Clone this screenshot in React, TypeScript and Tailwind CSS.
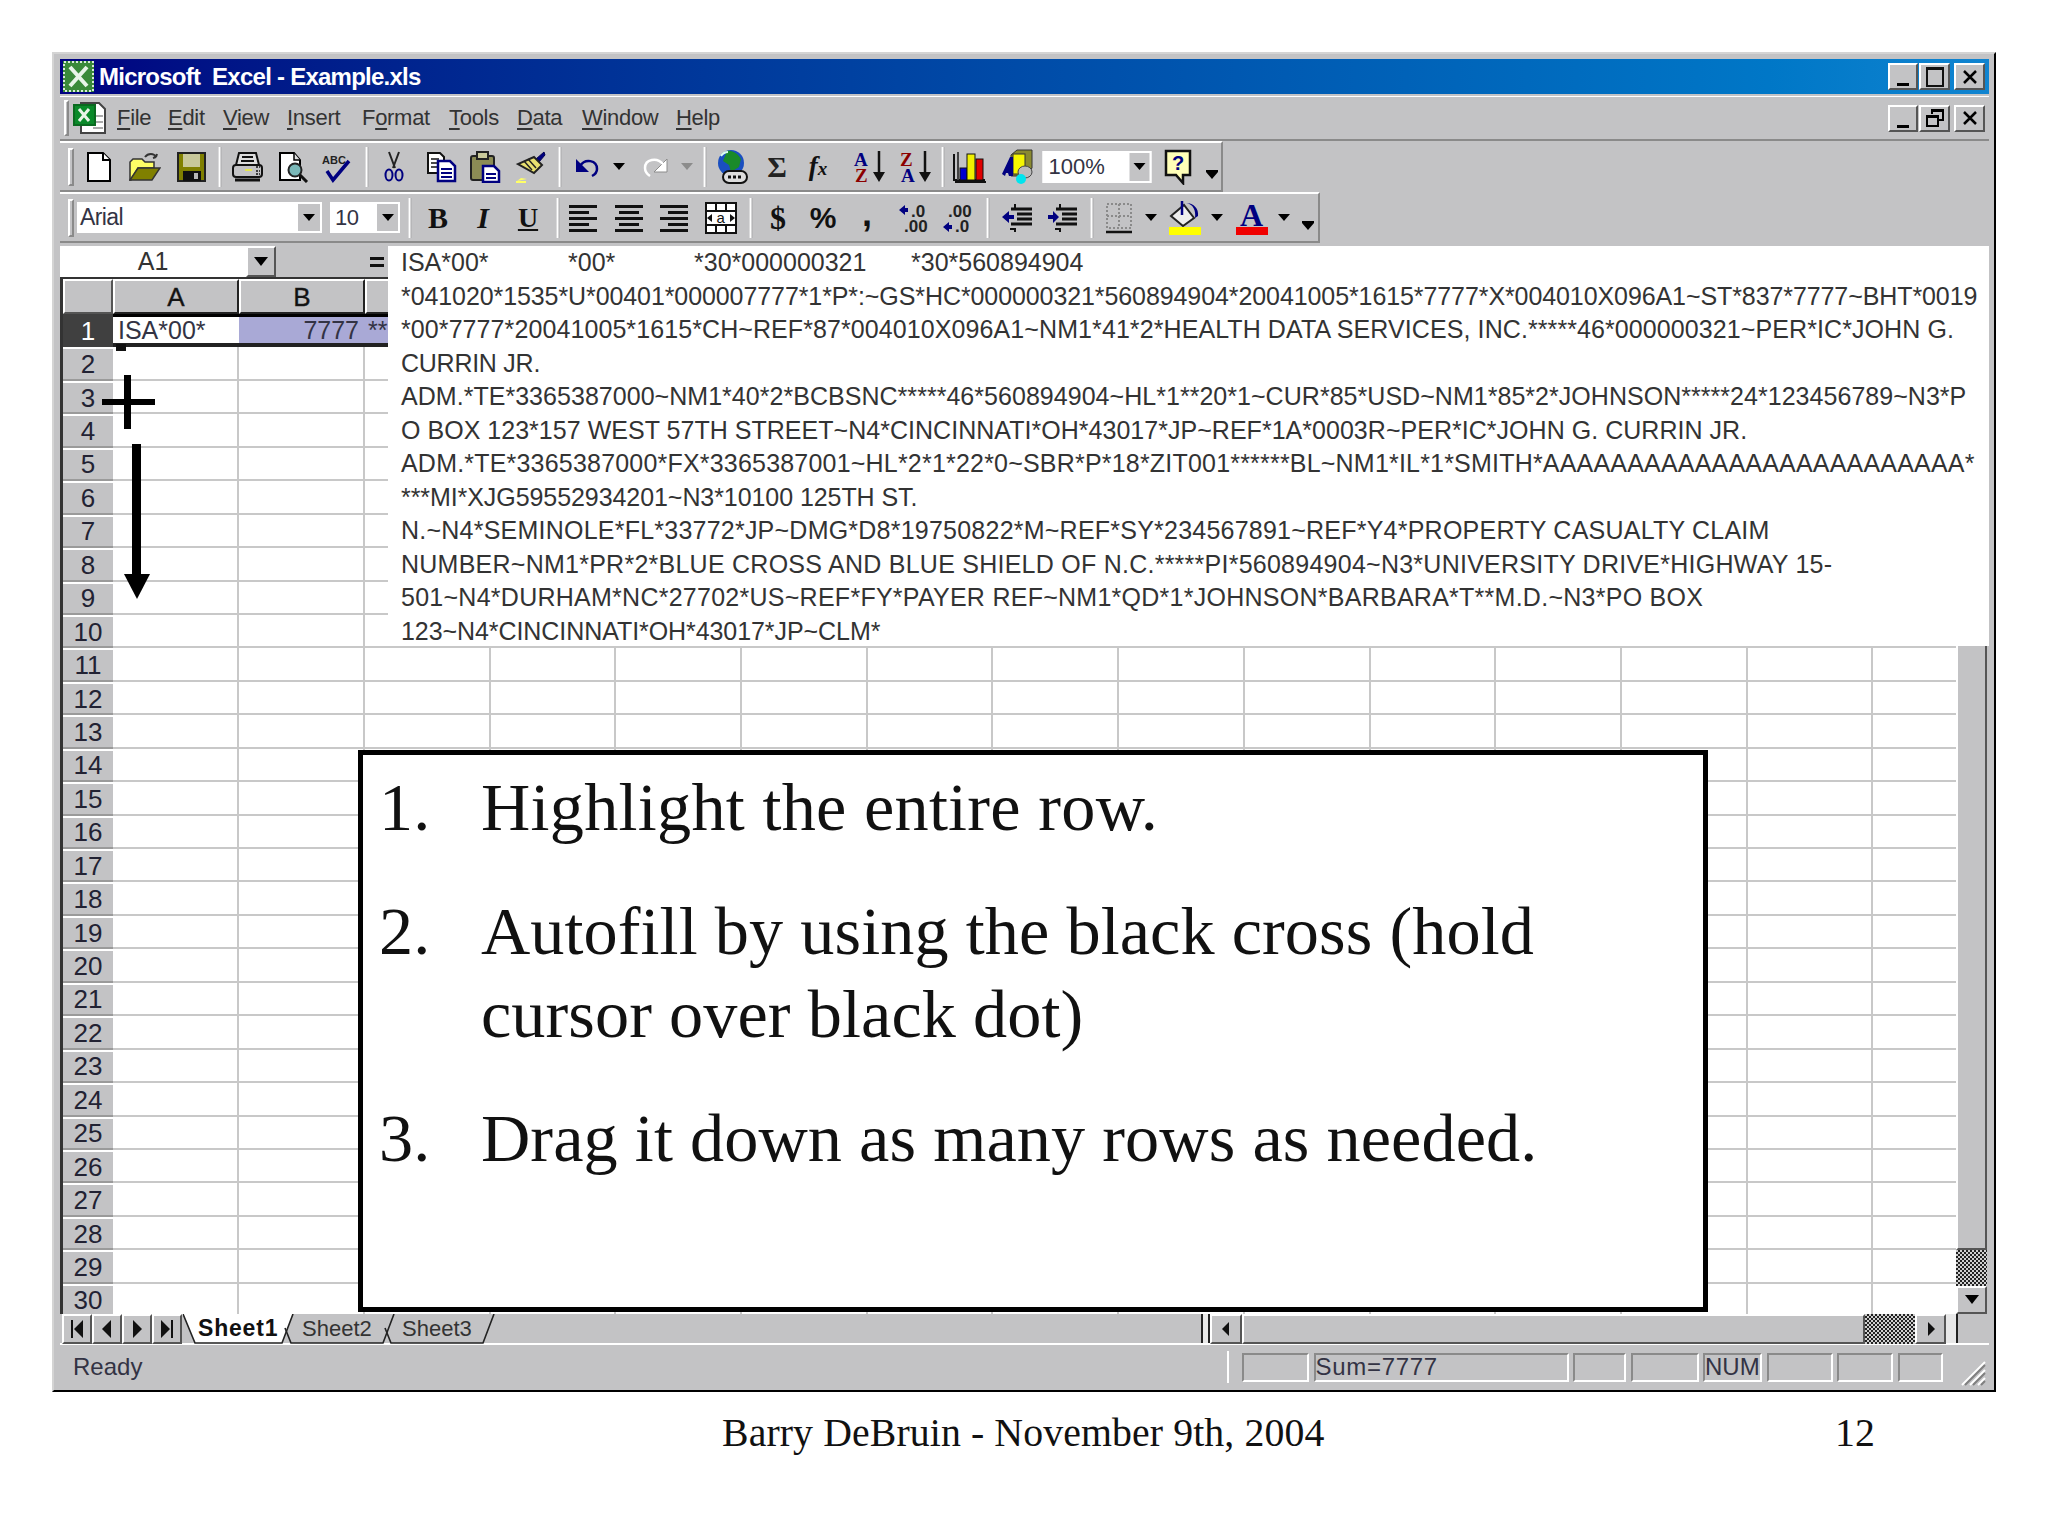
import type { ReactNode } from "react";

const GRAY = "bg-[#c3c3c5]";

function Ico({ w = 32, h = 32, children }: { w?: number; h?: number; children: ReactNode }) {
  return (
    <svg width={w} height={h} viewBox={`0 0 ${w} ${h}`} className="block flex-none">
      {children}
    </svg>
  );
}

// one toolbar entry: the child is centred on the left edge of the slot, the slot width is the step to the next one
function Slot({ w, children }: { w: string; children: ReactNode }) {
  return (
    <div className={`flex h-full flex-none items-center ${w}`}>
      <div className="flex-none -translate-x-1/2">{children}</div>
    </div>
  );
}

const Sep = () => <div className="h-[40px] w-[3px] border-l-2 border-white bg-[#a9a9ab]" />;
const Handle = () => <div className="h-[38px] w-[6px] flex-none border-l-2 border-t-2 border-white border-r-2 border-b-2 border-r-[#8a8a8a] border-b-[#8a8a8a]" />;

const Drop = ({ faded = false, low = false }: { faded?: boolean; low?: boolean }) => (
  <Ico w={14} h={low ? 28 : 10}>
    <polygon points={low ? "1,19 13,19 7,26" : "1,1 13,1 7,8"} fill={faded ? "#8c8c8c" : "#000"} />
    {low && <rect x="1" y="17" width="12" height="2" fill="#000" />}
  </Ico>
);

const NewIcon = () => (
  <Ico>
    <path d="M5 2h15l7 7v21H5z" fill="#fff" stroke="#000" strokeWidth="2" />
    <path d="M20 2v7h7" fill="#fff" stroke="#000" strokeWidth="2" />
  </Ico>
);
const OpenIcon = () => (
  <Ico>
    <path d="M1 29V11l3-3h9l3 3h9v6H9L2 29z" fill="#ffff66" stroke="#333" strokeWidth="1.5" />
    <path d="M1 29l8-12h22l-8 12z" fill="#808000" stroke="#333" strokeWidth="1.5" />
    <path d="M16 6c3-4 9-4 11 0M27 6l-3 1M27 6l1-3" fill="none" stroke="#333" strokeWidth="2" />
  </Ico>
);
const SaveIcon = () => (
  <Ico>
    <rect x="3" y="2" width="27" height="28" fill="#808000" stroke="#222" strokeWidth="2" />
    <rect x="8" y="3" width="17" height="13" fill="#c8c89a" />
    <rect x="8" y="20" width="18" height="10" fill="#111" />
    <rect x="19" y="22" width="4" height="6" fill="#b8b8b8" />
  </Ico>
);
const PrintIcon = () => (
  <Ico>
    <path d="M8 2h17l3 12H5z" fill="#ddd" stroke="#111" strokeWidth="2" />
    <path d="M11 6h11M10 10h13" stroke="#111" strokeWidth="2" />
    <rect x="2" y="14" width="29" height="12" rx="3" fill="#c3c3c5" stroke="#111" strokeWidth="2" />
    <path d="M4 29h25" stroke="#111" strokeWidth="3" />
    <rect x="14" y="18" width="7" height="2" fill="#e6e64d" />
    <path d="M25 16h4M25 20h4M25 23h4" stroke="#111" strokeWidth="1.5" strokeDasharray="2 1" />
  </Ico>
);
const PreviewIcon = () => (
  <Ico>
    <path d="M3 2h14l6 7v20H3z" fill="#fff" stroke="#000" strokeWidth="2" />
    <path d="M17 2v7h6" fill="#e0e0e0" stroke="#000" strokeWidth="1.5" />
    <circle cx="18" cy="19" r="6.5" fill="#7ab8b8" stroke="#222" strokeWidth="2" />
    <path d="M23 24l7 7" stroke="#111" strokeWidth="3" />
  </Ico>
);
const SpellIcon = () => (
  <Ico w={32} h={34}>
    <text x="1" y="14" fontFamily="Liberation Sans" fontWeight="700" fontSize="11" fill="#222">
      ABC
    </text>
    <path d="M6 21l6 9L28 11" fill="none" stroke="#000080" strokeWidth="3.5" />
  </Ico>
);
const CutIcon = () => (
  <Ico w={24}>
    <path d="M7 1l6 16M17 1l-6 16" stroke="#222" strokeWidth="2" fill="none" />
    <ellipse cx="7" cy="24" rx="3.5" ry="5.5" fill="none" stroke="#000080" strokeWidth="2" />
    <ellipse cx="17" cy="24" rx="3.5" ry="5.5" fill="none" stroke="#000080" strokeWidth="2" />
  </Ico>
);
const CopyIcon = () => (
  <Ico>
    <path d="M2 2h12l4 4v16H2z" fill="#fff" stroke="#111" strokeWidth="2" />
    <path d="M5 8h8M5 12h8M5 16h8" stroke="#111" strokeWidth="1.5" />
    <path d="M12 10h12l5 5v15H12z" fill="#fff" stroke="#000080" strokeWidth="2.5" />
    <path d="M15 18h11M15 22h11M15 26h11" stroke="#000080" strokeWidth="2" />
  </Ico>
);
const PasteIcon = () => (
  <Ico>
    <rect x="2" y="5" width="23" height="24" rx="2" fill="#8c8c55" stroke="#222" strokeWidth="2" />
    <rect x="8" y="1" width="11" height="7" fill="#c9c99a" stroke="#222" strokeWidth="2" />
    <path d="M14 15h11l5 5v11H14z" fill="#fff" stroke="#000080" strokeWidth="2.5" />
    <path d="M17 23h10M17 27h10" stroke="#000080" strokeWidth="2" />
  </Ico>
);
const BrushIcon = () => (
  <Ico>
    <path d="M22 8l8-7 1 3-6 7z" fill="#000080" stroke="#000050" />
    <path d="M20 6l8 8-8 8L4 13z" fill="#e8e070" stroke="#222" strokeWidth="2" />
    <path d="M10 10l8 9M14 8l8 9" stroke="#222" strokeWidth="1.5" />
    <path d="M3 30l10-2-6-1z" fill="#ffff66" />
    <path d="M2 31h10" stroke="#ffff66" strokeWidth="2" />
  </Ico>
);
const UndoIcon = () => (
  <Ico w={30} h={24}>
    <path d="M4 4v13h13z" fill="#000080" />
    <path d="M8 11c5-8 17-6 17 3 0 4-3 6-5 7" fill="none" stroke="#000080" strokeWidth="2.5" />
  </Ico>
);
const RedoIcon = () => (
  <Ico w={30} h={24}>
    <path d="M26 4v13H13z" fill="#fff" stroke="#8c8c8c" />
    <path d="M22 9C16 2 4 4 4 13c0 4 2 6 5 8" fill="none" stroke="#fff" strokeWidth="2.5" />
  </Ico>
);
const GlobeIcon = () => (
  <Ico w={34} h={36}>
    <circle cx="15" cy="14" r="13" fill="#1a4fc0" />
    <path d="M11 2c6-1 11 3 14 8l-2 8-8 5-2-7-6-4z" fill="#1a8a2a" />
    <path d="M5 7c2-3 5-4 7-4" stroke="#dfe" strokeWidth="2" fill="none" />
    <rect x="7" y="22" width="24" height="12" rx="6" fill="#ddd" stroke="#111" strokeWidth="2" />
    <path d="M12 28h14" stroke="#111" strokeWidth="3" strokeDasharray="3 2" />
  </Ico>
);
const SortIcon = ({ top, bottom, topC, botC }: { top: string; bottom: string; topC: string; botC: string }) => (
  <Ico w={36} h={42}>
    <text x="1" y="20" fontFamily="Liberation Serif" fontWeight="700" fontSize="19" fill={topC}>
      {top}
    </text>
    <text x="2" y="36" fontFamily="Liberation Serif" fontWeight="700" fontSize="19" fill={botC}>
      {bottom}
    </text>
    <path d="M26 5v24" stroke="#111" strokeWidth="2.5" />
    <polygon points="20,26 32,26 26,36" fill="#111" />
  </Ico>
);
const ChartIcon = () => (
  <Ico w={36} h={34}>
    <path d="M2 4v26h31" fill="none" stroke="#111" strokeWidth="2" />
    <rect x="5" y="2" width="2" height="28" fill="#444" />
    <rect x="8" y="18" width="7" height="12" fill="#0000d0" stroke="#111" />
    <rect x="15" y="4" width="8" height="26" fill="#f0f000" stroke="#111" />
    <rect x="24" y="9" width="7" height="21" fill="#e00000" stroke="#111" />
    <path d="M3 32h31" stroke="#111" strokeWidth="2" />
  </Ico>
);
const MapIcon = () => (
  <Ico w={32} h={36}>
    <path d="M10 6l6-5h15v18l-6 8H10z" fill="#8a8a30" stroke="#333" />
    <rect x="12" y="5" width="12" height="20" fill="#f5f500" stroke="#333" />
    <path d="M1 25L9 8l3 0v19H8l-1-3H5l-1 3z" fill="#000080" />
    <ellipse cx="24" cy="23" rx="7" ry="6" fill="#bbb" stroke="#444" />
    <circle cx="20" cy="30" r="5" fill="#00e5ee" />
  </Ico>
);
const HelpIcon = () => (
  <Ico w={30} h={36}>
    <path d="M3 2h24v24H20v8l-7-8H3z" fill="#ffffb8" stroke="#111" strokeWidth="2.5" />
    <text x="9" y="21" fontFamily="Liberation Sans" fontWeight="700" fontSize="20" fill="#000080">
      ?
    </text>
  </Ico>
);
const AlignIcon = ({ kind }: { kind: "l" | "c" | "r" }) => {
  const rows = [28, 20, 28, 20, 28];
  return (
    <Ico w={30} h={30}>
      {rows.map((r, i) => (
        <rect key={i} x={kind === "l" ? 1 : kind === "c" ? 1 + (28 - r) / 2 : 29 - r} y={2 + i * 6} width={r} height="3" fill="#111" />
      ))}
    </Ico>
  );
};
const MergeIcon = () => (
  <Ico>
    <rect x="1" y="1" width="30" height="30" fill="#fff" stroke="#111" strokeWidth="2" />
    <path d="M1 9h30M1 23h30M11 1v8M21 1v8M11 23v8M21 23v8" stroke="#111" strokeWidth="2" />
    <path d="M2 16l5-4v8zM30 16l-5-4v8z" fill="#111" />
    <text x="11.5" y="21" fontFamily="Liberation Sans" fontSize="15" fill="#111">
      a
    </text>
  </Ico>
);
const DecIcon = ({ up }: { up: boolean }) => (
  <Ico w={32} h={38}>
    <text x={up ? 13 : 6} y="18" fontFamily="Liberation Sans" fontWeight="700" fontSize="17" fill="#222">
      {up ? ".0" : ".00"}
    </text>
    <text x={up ? 6 : 13} y="33" fontFamily="Liberation Sans" fontWeight="700" fontSize="17" fill="#222">
      {up ? ".00" : ".0"}
    </text>
    <path d={up ? "M1 11l6-5v3h3v4H7v3z" : "M1 28l6-5v3h3v4H7v3z"} fill="#000080" />
  </Ico>
);
const IndentIcon = ({ out }: { out: boolean }) => (
  <Ico>
    <path d="M14 2v4M14 26v4" stroke="#111" strokeWidth="2" />
    <path d="M10 7h21M16 12h15M16 17h15M10 22h21" stroke="#111" strokeWidth="3" />
    <path d="M9 27h6" stroke="#111" strokeWidth="2" />
    {out ? <path d="M1 15l7-6v4h5v4H8v4z" fill="#000080" /> : <path d="M13 15l-6-6v4H2v4h5v4z" fill="#000080" />}
  </Ico>
);
const BorderIcon = () => (
  <Ico>
    <rect x="4" y="2" width="24" height="24" fill="none" stroke="#8a8a8a" strokeWidth="2" strokeDasharray="2 2" />
    <path d="M16 2v24M4 14h24" stroke="#8a8a8a" strokeWidth="2" strokeDasharray="2 2" />
    <path d="M3 30h26" stroke="#111" strokeWidth="2.5" />
  </Ico>
);
const FillIcon = () => (
  <Ico w={34} h={36}>
    <path d="M3 16L16 5l10 13-11 8z" fill="#eee" stroke="#222" strokeWidth="2" />
    <path d="M14 1v14" stroke="#000080" strokeWidth="2.5" />
    <path d="M18 3c7 1 10 7 9 15l3-2c1-7-4-13-12-13z" fill="#000080" />
    <rect x="1" y="27" width="32" height="8" fill="#ffff00" />
  </Ico>
);
const FontColorIcon = () => (
  <Ico w={34} h={44}>
    <text x="5" y="30" fontFamily="Liberation Serif" fontWeight="700" fontSize="32" fill="#000080">
      A
    </text>
    <rect x="1" y="31" width="32" height="8" fill="#f00000" />
  </Ico>
);
const Glyph = ({ children, cls }: { children: ReactNode; cls: string }) => <span className={`block leading-none ${cls}`}>{children}</span>;

const SERIF = "[font-family:'Liberation_Serif',serif]";

const row1: [string, ReactNode][] = [
  ["w-[46px]", <NewIcon />],
  ["w-[46px]", <OpenIcon />],
  ["w-[29px]", <SaveIcon />],
  ["w-[27px]", <Sep />],
  ["w-[46px]", <PrintIcon />],
  ["w-[44px]", <PreviewIcon />],
  ["w-[30px]", <SpellIcon />],
  ["w-[27px]", <Sep />],
  ["w-[48px]", <CutIcon />],
  ["w-[43px]", <CopyIcon />],
  ["w-[45px]", <PasteIcon />],
  ["w-[30px]", <BrushIcon />],
  ["w-[27px]", <Sep />],
  ["w-[32px]", <UndoIcon />],
  ["w-[37px]", <Drop />],
  ["w-[31px]", <RedoIcon />],
  ["w-[18px]", <Drop faded />],
  ["w-[28px]", <Sep />],
  ["w-[44px]", <GlobeIcon />],
  ["w-[41px]", <Glyph cls={`text-[30px] font-bold text-[#222] ${SERIF}`}>Σ</Glyph>],
  [
    "w-[53px]",
    <Glyph cls={`text-[27px] font-bold italic text-[#111] ${SERIF}`}>
      f<span className="text-[19px]">x</span>
    </Glyph>,
  ],
  ["w-[46px]", <SortIcon top="A" bottom="Z" topC="#000080" botC="#8b0000" />],
  ["w-[26px]", <SortIcon top="Z" bottom="A" topC="#8b0000" botC="#000080" />],
  ["w-[27px]", <Sep />],
  ["w-[47px]", <ChartIcon />],
  ["w-[80px]", <MapIcon />],
  [
    "w-[81px]",
    <div className="flex h-[32px] w-[109px] items-center justify-between border-2 border-white bg-white pl-[4px]">
      <span className="text-[22px] text-[#334]">100%</span>
      <span className="flex h-full w-[20px] items-center justify-center bg-[#c3c3c5]">
        <Drop />
      </span>
    </div>,
  ],
  ["w-[34px]", <HelpIcon />],
  ["w-0", <Drop low />],
];

const row2: [string, ReactNode][] = [
  ["w-[45px]", <Glyph cls={`text-[30px] font-bold text-[#111] ${SERIF}`}>B</Glyph>],
  ["w-[45px]", <Glyph cls={`text-[30px] font-bold italic text-[#111] ${SERIF}`}>I</Glyph>],
  ["w-[30px]", <Glyph cls={`text-[28px] font-bold underline text-[#111] ${SERIF}`}>U</Glyph>],
  ["w-[25px]", <Sep />],
  ["w-[46px]", <AlignIcon kind="l" />],
  ["w-[45px]", <AlignIcon kind="c" />],
  ["w-[47px]", <AlignIcon kind="r" />],
  ["w-[30px]", <MergeIcon />],
  ["w-[27px]", <Sep />],
  ["w-[45px]", <Glyph cls={`text-[32px] font-bold text-[#111] ${SERIF}`}>$</Glyph>],
  ["w-[44px]", <Glyph cls="text-[30px] font-bold text-[#111]">%</Glyph>],
  ["w-[47px]", <Glyph cls="-mt-[8px] text-[36px] font-bold text-[#111]">,</Glyph>],
  ["w-[44px]", <DecIcon up />],
  ["w-[30px]", <DecIcon up={false} />],
  ["w-[29px]", <Sep />],
  ["w-[45px]", <IndentIcon out />],
  ["w-[30px]", <IndentIcon out={false} />],
  ["w-[27px]", <Sep />],
  ["w-[32px]", <BorderIcon />],
  ["w-[34px]", <Drop />],
  ["w-[32px]", <FillIcon />],
  ["w-[35px]", <Drop />],
  ["w-[32px]", <FontColorIcon />],
  ["w-[24px]", <Drop />],
  ["w-0", <Drop low />],
];

const menus: [string, string, string, string][] = [
  ["w-[51px]", "", "F", "ile"],
  ["w-[55px]", "", "E", "dit"],
  ["w-[64px]", "", "V", "iew"],
  ["w-[75px]", "", "I", "nsert"],
  ["w-[87px]", "F", "o", "rmat"],
  ["w-[68px]", "", "T", "ools"],
  ["w-[65px]", "", "D", "ata"],
  ["w-[94px]", "", "W", "indow"],
  ["w-[50px]", "", "H", "elp"],
];

const formula: [string, string][] = [
  ["tracking-[-0.09px]", "*041020*1535*U*00401*000007777*1*P*:~GS*HC*000000321*560894904*20041005*1615*7777*X*004010X096A1~ST*837*7777~BHT*0019"],
  ["tracking-[0.09px]", "*00*7777*20041005*1615*CH~REF*87*004010X096A1~NM1*41*2*HEALTH DATA SERVICES, INC.*****46*000000321~PER*IC*JOHN G."],
  ["tracking-[-0.26px]", "CURRIN JR."],
  ["tracking-[0.035px]", "ADM.*TE*3365387000~NM1*40*2*BCBSNC*****46*560894904~HL*1**20*1~CUR*85*USD~NM1*85*2*JOHNSON*****24*123456789~N3*P"],
  ["tracking-[0.03px]", "O BOX 123*157 WEST 57TH STREET~N4*CINCINNATI*OH*43017*JP~REF*1A*0003R~PER*IC*JOHN G. CURRIN JR."],
  ["tracking-[0.2px]", "ADM.*TE*3365387000*FX*3365387001~HL*2*1*22*0~SBR*P*18*ZIT001******BL~NM1*IL*1*SMITH*AAAAAAAAAAAAAAAAAAAAAAAAA*"],
  ["tracking-[-0.07px]", "***MI*XJG59552934201~N3*10100 125TH ST."],
  ["tracking-[0.23px]", "N.~N4*SEMINOLE*FL*33772*JP~DMG*D8*19750822*M~REF*SY*234567891~REF*Y4*PROPERTY CASUALTY CLAIM"],
  ["tracking-[0.25px]", "NUMBER~NM1*PR*2*BLUE CROSS AND BLUE SHIELD OF N.C.*****PI*560894904~N3*UNIVERSITY DRIVE*HIGHWAY 15-"],
  ["tracking-[0.26px]", "501~N4*DURHAM*NC*27702*US~REF*FY*PAYER REF~NM1*QD*1*JOHNSON*BARBARA*T**M.D.~N3*PO BOX"],
  ["tracking-[-0.07px]", "123~N4*CINCINNATI*OH*43017*JP~CLM*"],
];

const bevel = "border-2 border-t-white border-l-white border-r-[#555] border-b-[#555]";
const ctrlBtn = `flex items-center justify-center bg-[#c3c3c5] ${bevel}`;
const dither = "bg-[repeating-conic-gradient(#222_0_25%,#d0d0d0_0_50%)] bg-[length:4px_4px]";

function WinButtons({ restore }: { restore?: boolean }) {
  return (
    <div className="flex items-center">
      <div className={`${ctrlBtn} h-[27px] w-[30px] items-end pb-[2px]`}>
        <div className="h-[3px] w-[12px] bg-black" />
      </div>
      <div className={`${ctrlBtn} ml-[1px] h-[27px] w-[31px]`}>
        {restore ? (
          <Ico w={18} h={18}>
            <path d="M6 5V1h11v10h-4" fill="none" stroke="#000" strokeWidth="2" />
            <path d="M6 2h11" stroke="#000" strokeWidth="2" />
            <rect x="1" y="7" width="11" height="10" fill="none" stroke="#000" strokeWidth="2" />
            <path d="M1 8h11" stroke="#000" strokeWidth="2" />
          </Ico>
        ) : (
          <Ico w={20} h={20}>
            <rect x="2" y="1" width="16" height="18" fill="none" stroke="#111" strokeWidth="2" />
            <path d="M2 2h16" stroke="#111" strokeWidth="2" />
          </Ico>
        )}
      </div>
      <div className={`${ctrlBtn} ml-[4px] h-[27px] w-[31px]`}>
        <Ico w={16} h={16}>
          <path d="M2 2l12 12M14 2L2 14" stroke="#000" strokeWidth="2.5" />
        </Ico>
      </div>
    </div>
  );
}

const colWidths = ["w-[126px]", "w-[126px]"];
const gridCols = Array.from({ length: 15 }, (_, i) => colWidths[i] ?? "w-[125.7px]");

function HeaderRow() {
  return (
    <div className="flex h-[35px] flex-none">
      <div className={`h-full w-[50px] flex-none bg-[#c3c3c5] ${bevel}`} />
      {gridCols.map((w, i) => (
        <div key={i} className={`flex h-full flex-none items-center justify-center border-2 border-t-white border-l-white border-r-[#222] border-b-[#222] bg-[#c3c3c5] text-[26px] leading-none text-[#111] [-webkit-text-stroke:0.4px_#222] ${w}`}>
          {i === 0 ? "A" : i === 1 ? "B" : ""}
        </div>
      ))}
    </div>
  );
}

function SheetRow({ n }: { n: number }) {
  const active = n === 1;
  return (
    <div className="flex h-[33.44px] flex-none">
      <div
        className={`flex h-full w-[50px] flex-none items-center justify-center text-[26px] leading-none ${
          active ? "bg-[#404040] text-white" : "border-b-2 border-t-2 border-t-white border-b-[#9a9a9a] bg-[#c3c3c5] text-[#223]"
        }`}
      >
        {n}
      </div>
      {gridCols.map((w, i) => (
        <div
          key={i}
          className={`flex h-full flex-none items-center overflow-hidden whitespace-nowrap text-[25px] leading-none text-[#334] ${w} ${
            active
              ? `border-t-[3px] border-b-[4px] border-t-black border-b-[#222] ${i === 0 ? "bg-white pl-[5px]" : "bg-[#a9a9d6]"} ${i === 1 ? "justify-end pr-[6px]" : "pl-[3px]"}`
              : "border-b-2 border-r-2 border-[#c8c8c8] bg-white"
          }`}
        >
          {active && i === 0 && "ISA*00*"}
          {active && i === 1 && "7777"}
          {active && i === 2 && "**"}
        </div>
      ))}
    </div>
  );
}

function Tab({ w, label, active }: { w: string; label: string; active?: boolean }) {
  return (
    <div className={`relative flex h-full flex-none items-center ${active ? "pl-[15px]" : "pl-[18px]"} ${w}`}>
      <svg className="absolute left-0 top-0" width="112" height="31" viewBox="0 0 112 31">
        {active && <polygon points="0,0 12,29 99,29 110,0" fill="#fff" />}
        <path d={active ? "M0 0L12 29H99L110 0" : "M1 14L7 29H99L110 0"} fill="none" stroke="#222" strokeWidth="1.6" />
      </svg>
      <span className={`relative leading-none ${active ? "text-[23px] font-bold tracking-[0.8px] text-[#111]" : "text-[22px] text-[#333]"}`}>{label}</span>
    </div>
  );
}

function NavBtn({ d, cls }: { d: string; cls: string }) {
  return (
    <div className={`${ctrlBtn} h-[30px] flex-none ${cls}`}>
      <Ico w={16} h={20}>
        <path d={d} fill="#111" />
      </Ico>
    </div>
  );
}

const Panel = ({ w, text, track = "" }: { w: string; text?: string; track?: string }) => (
  <div className={`flex h-[29px] flex-none items-center border-2 border-t-[#8a8a8a] border-l-[#8a8a8a] border-r-white border-b-white text-[24px] leading-none text-[#334] ${track} ${w}`}>{text}</div>
);

export default function App() {
  return (
    <div className="relative h-[1536px] w-[2048px] overflow-hidden bg-white pl-[52px] pt-[52px] [font-family:'Liberation_Sans',Arial,sans-serif]">
      <div className={`flex h-[1340px] w-[1944px] flex-col border-b-2 border-l-2 border-r-2 border-t-2 border-b-black border-l-[#d4d4d4] border-r-black border-t-[#d4d4d4] pb-[1px] pl-[6px] pr-[5px] pt-[5px] ${GRAY}`}>
        {/* Title bar */}
        <div className="flex h-[35px] flex-none items-center justify-between bg-gradient-to-r from-[#000080] to-[#1084d0] pl-[3px] pr-[4px]">
          <div className="flex items-center">
            <Ico w={31} h={31}>
              <rect width="31" height="31" fill="#3a8a3a" />
              <rect x="1" y="1" width="29" height="29" fill="none" stroke="#d8ecd8" strokeWidth="2" strokeDasharray="2 2" />
              <path d="M7 6l17 19M24 6L7 25" stroke="#e8f4e8" strokeWidth="4" />
            </Ico>
            <span className="ml-[5px] whitespace-pre text-[24px] font-bold leading-none tracking-[-0.75px] text-white">Microsoft  Excel - Example.xls</span>
          </div>
          <WinButtons />
        </div>
        <div className="mt-[2px] h-[1px] flex-none bg-white" />
        {/* Menu bar */}
        <div className="flex h-[44px] flex-none items-center justify-between border-b-2 border-[#8a8a8a] pl-[4px] pr-[4px]">
          <div className="flex items-center">
            <div className="h-[36px] w-[5px] flex-none border-l-2 border-t-2 border-white border-b-2 border-r-2 border-b-[#8a8a8a] border-r-[#8a8a8a]" />
            <div className="ml-[4px]">
              <Ico w={34} h={32}>
                <path d="M8 1h18l6 6v24H8z" fill="#fff" stroke="#444" strokeWidth="2" />
                <path d="M20 14h10M20 20h10M20 26h10" stroke="#aaa" strokeWidth="2" />
                <rect x="1" y="3" width="21" height="20" fill="#0a8a2a" stroke="#0a6a20" strokeWidth="2" />
                <path d="M6 7l10 12M16 7L6 19" stroke="#e8f4e8" strokeWidth="3" />
              </Ico>
            </div>
            <div className="ml-[10px] flex items-center text-[22px] leading-none tracking-[-0.3px] text-[#333]">
              {menus.map(([w, pre, u, rest]) => (
                <span key={u + rest} className={`flex-none ${w}`}>
                  {pre}
                  <span className="underline underline-offset-[3px]">{u}</span>
                  {rest}
                </span>
              ))}
            </div>
          </div>
          <WinButtons restore />
        </div>
        {/* Toolbars */}
        <div className="flex h-[51px] w-[1163px] flex-none items-center border-t-2 border-r-2 border-b-2 border-t-white border-r-[#8a8a8a] border-b-[#8a8a8a] pl-[8px]">
          <Handle />
          <div className="w-[25px] flex-none" />
          {row1.map(([w, node], i) => (
            <Slot key={i} w={w}>
              {node}
            </Slot>
          ))}
        </div>
        <div className="flex h-[51px] w-[1260px] flex-none items-center border-t-2 border-r-2 border-b-2 border-t-white border-r-[#8a8a8a] border-b-[#8a8a8a] pl-[8px]">
          <Handle />
          <div className="ml-[3px] flex h-[31px] w-[245px] flex-none items-center justify-between border-2 border-white bg-white pl-[1px] text-[23px] leading-none tracking-[-0.6px] text-[#334]">
            Arial
            <span className="flex h-full w-[22px] items-center justify-center bg-[#c3c3c5]">
              <Drop />
            </span>
          </div>
          <div className="ml-[8px] flex h-[31px] w-[70px] flex-none items-center justify-between border-2 border-white bg-white pl-[3px] text-[22px] leading-none tracking-[-0.5px] text-[#334]">
            10
            <span className="flex h-full w-[21px] items-center justify-center bg-[#c3c3c5]">
              <Drop />
            </span>
          </div>
          <div className="w-[10px] flex-none" />
          <Slot w="w-[28px]">
            <Sep />
          </Slot>
          {row2.map(([w, node], i) => (
            <Slot key={i} w={w}>
              {node}
            </Slot>
          ))}
        </div>
        {/* Sheet */}
        <div className="relative mt-[3px] flex min-h-0 flex-1 flex-col">
          <div className="flex h-[33px] flex-none items-center border-b-2 border-[#333]">
            <div className="flex h-full w-[186px] flex-none items-center justify-center bg-white pl-[0px] text-[25px] leading-none text-[#333]">A1</div>
            <div className={`${ctrlBtn} h-full w-[30px] flex-none`}>
              <Ico w={16} h={10}>
                <polygon points="1,0 15,0 8,9" fill="#000" />
              </Ico>
            </div>
            <div className="ml-[94px] flex-none">
              <Ico w={14} h={12}>
                <rect y="1" width="14" height="3" fill="#111" />
                <rect y="8" width="14" height="3" fill="#111" />
              </Ico>
            </div>
          </div>
          <div className="flex h-[1035px] flex-none">
            <div className="relative min-w-0 flex-1 overflow-hidden border-l-[3px] border-[#333]">
              <HeaderRow />
              {Array.from({ length: 30 }, (_, i) => (
                <SheetRow key={i} n={i + 1} />
              ))}
              {/* selection handle */}
              <div className="absolute left-[53px] top-[65px] h-[7px] w-[10px] bg-[#111]" />
            </div>
            <div className="flex w-[33px] flex-none flex-col pr-[2px]">
              <div className={`min-h-0 flex-1 bg-[#c3c3c5] ${bevel}`} />
              <div className={`h-[36px] flex-none ${dither}`} />
              <div className={`${ctrlBtn} h-[28px] flex-none`}>
                <Ico w={16} h={10}>
                  <polygon points="1,0 15,0 8,9" fill="#000" />
                </Ico>
              </div>
            </div>
          </div>
          {/* Tabs + horizontal scrollbar */}
          <div className="flex h-[31px] flex-none items-start border-b-2 border-white pl-[2px]">
            <NavBtn cls="w-[30px]" d="M2 1h2v18H2zM14 1v18L5 10z" />
            <NavBtn cls="w-[30px]" d="M12 1v18L3 10z" />
            <NavBtn cls="w-[30px]" d="M4 1v18l9-9z" />
            <NavBtn cls="w-[30px]" d="M2 1v18l9-9zM12 1h2v18h-2z" />
            <div className="w-[1px] flex-none" />
            <Tab w="w-[101px]" label="Sheet1" active />
            <Tab w="w-[100px]" label="Sheet2" />
            <Tab w="w-[114px]" label="Sheet3" />
            <div className="w-[703px] flex-none" />
            <div className="h-full w-[9px] flex-none border-l-2 border-r-2 border-l-[#222] border-r-[#222] bg-[#e8e8e8]" />
            <NavBtn cls="w-[32px]" d="M11 3v14L4 10z" />
            <div className={`h-[30px] w-[623px] flex-none ${bevel}`} />
            <div className={`h-[30px] w-[50px] flex-none ${dither}`} />
            <NavBtn cls="w-[31px]" d="M5 3v14l7-7z" />
            <div className="h-full w-[12px] flex-none border-r-2 border-[#222] bg-[#e8e8e8]" />
          </div>
          {/* Status bar */}
          <div className="flex min-h-0 flex-1 items-center pl-[13px] pr-[2px] text-[24px] leading-none text-[#334]">
            <div className="w-[1154px] flex-none">Ready</div>
            <div className="h-[32px] w-[2px] flex-none bg-white" />
            <div className="ml-[13px] flex items-center gap-[4.5px]">
              <Panel w="w-[67px]" />
              <Panel w="w-[255px]" text="Sum=7777" track="tracking-[0.7px]" />
              <Panel w="w-[53px]" />
              <Panel w="w-[68px]" />
              <Panel w="w-[59px]" text="NUM" />
              <Panel w="w-[66px]" />
              <Panel w="w-[56px]" />
              <Panel w="w-[45px]" />
            </div>
            <div className="ml-auto self-end pb-[3px]">
              <Ico w={28} h={26}>
                <path d="M3 25L26 2M11 25L26 10M19 25l7-7" stroke="#fff" strokeWidth="2" />
                <path d="M6 25L26 5M14 25L26 13M22 25l4-4" stroke="#808080" strokeWidth="2" />
              </Ico>
            </div>
          </div>

          {/* Expanded formula text lies over the sheet */}
          <div className="absolute left-[328px] right-0 top-0 h-[400px] bg-white pl-[13px] text-[25px] leading-[33.5px] text-[#333]">
            <div className="flex h-[33.5px] whitespace-pre">
              <span className="w-[167px] flex-none">ISA*00*</span>
              <span className="w-[126px] flex-none">*00*</span>
              <span className="w-[217px] flex-none">*30*000000321</span>
              <span>*30*560894904</span>
            </div>
            {formula.map(([track, line]) => (
              <div key={line} className={`h-[33.5px] whitespace-pre ${track}`}>
                {line}
              </div>
            ))}
          </div>

          {/* Cross and arrow drawn on the slide */}
          <div className="absolute left-[42px] top-[129px]">
            <Ico w={54} h={54}>
              <rect x="0" y="24" width="53" height="6" fill="#000" />
              <rect x="22" y="0" width="7" height="54" fill="#000" />
            </Ico>
          </div>
          <div className="absolute left-[64px] top-[198px]">
            <Ico w={26} h={156}>
              <rect x="8" y="0" width="9" height="131" fill="#000" />
              <polygon points="0,130 26,130 13,155" fill="#000" />
            </Ico>
          </div>

          {/* Numbered steps box */}
          <div className={`absolute left-[298px] top-[504px] h-[562px] w-[1350px] border-[5px] border-black bg-white pl-[16px] pt-[11px] text-[68.27px] leading-[83px] tracking-[0.07px] text-[#111] ${SERIF}`}>
            <div className="grid grid-cols-[102px_1fr]">
              <span>1.</span>
              <span className="tracking-[0.27px]">Highlight the entire row.</span>
            </div>
            <div className="mt-[41px] grid grid-cols-[102px_1fr]">
              <span>2.</span>
              <span>
                Autofill by using the black cross (hold
                <br />
                cursor over black dot)
              </span>
            </div>
            <div className="mt-[41px] grid grid-cols-[102px_1fr]">
              <span>3.</span>
              <span>Drag it down as many rows as needed.</span>
            </div>
          </div>
        </div>
      </div>
      {/* Slide footer */}
      <div className={`mt-[18px] flex pl-[670px] text-[39.8px] leading-[46px] tracking-[0.1px] text-[#111] ${SERIF}`}>
        <span className="w-[1113px] flex-none">Barry DeBruin - November 9th, 2004</span>
        <span className="tracking-normal">12</span>
      </div>
    </div>
  );
}
